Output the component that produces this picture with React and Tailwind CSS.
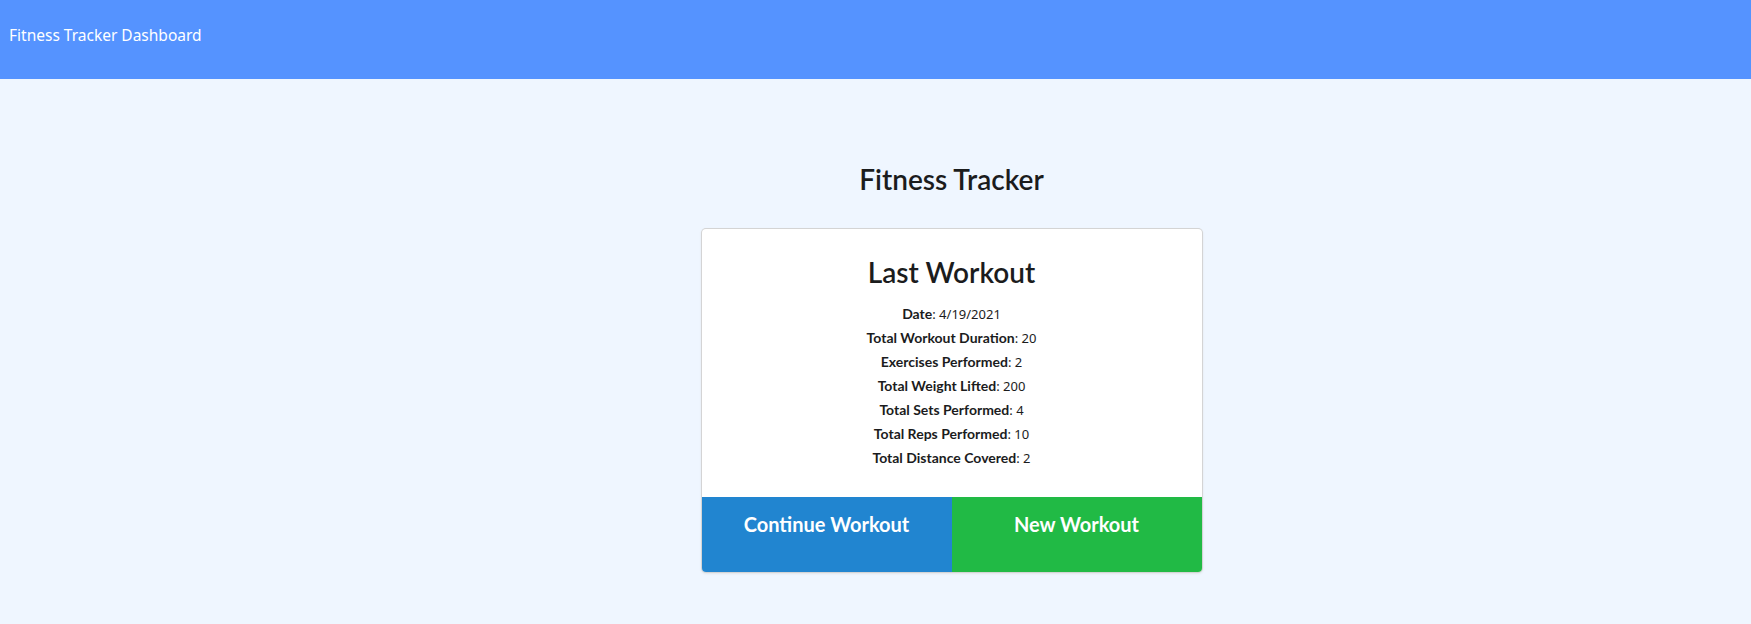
export default function App() {
  const rows = [
    ["Date", "4/19/2021"],
    ["Total Workout Duration", "20"],
    ["Exercises Performed", "2"],
    ["Total Weight Lifted", "200"],
    ["Total Sets Performed", "4"],
    ["Total Reps Performed", "10"],
    ["Total Distance Covered", "2"],
  ];
  return (
    <div className="w-full h-[624px] bg-[#eff6ff] overflow-hidden" style={{ fontFamily: '"Noto Sans", sans-serif' }}>
      <header className="h-[79px] bg-[#5593ff] flex items-center px-[9px]">
        <span className="text-white text-[15.5px] leading-none pb-[8px]">Fitness Tracker Dashboard</span>
      </header>
      <main className="flex flex-col items-center pl-[152px]">
        <h1 className="mt-[83px] text-[28px] leading-[34px] font-semibold text-[#1b1c1d] font-['Lato',sans-serif]">Fitness Tracker</h1>
        <div className="mt-[33px] w-[500px] bg-white rounded-[4px] shadow-[0_1px_3px_0_#d4d4d5,0_0_0_1px_#d4d4d5] overflow-hidden">
          <div className="pt-[25px] pb-[27px] flex flex-col items-center">
            <h2 className="text-[28px] leading-[36px] font-semibold text-[#1b1c1d] font-['Lato',sans-serif]">Last Workout</h2>
            <div className="mt-[12px] flex flex-col items-center text-[13px] leading-[24px] text-[#1b1c1d]">
              {rows.map(([k, v]) => (
                <div key={k}>
                  <span className="font-bold font-['Lato',sans-serif] text-[14px]">{k}</span>
                  <span>: {v}</span>
                </div>
              ))}
            </div>
          </div>
          <div className="flex h-[75px]">
            <button className="flex-1 bg-[#2185d0] text-white text-[20px] font-bold font-['Lato',sans-serif] pt-[12px] flex justify-center items-start">Continue Workout</button>
            <button className="flex-1 bg-[#21ba45] text-white text-[20px] font-bold font-['Lato',sans-serif] pt-[12px] flex justify-center items-start">New Workout</button>
          </div>
        </div>
      </main>
    </div>
  );
}
